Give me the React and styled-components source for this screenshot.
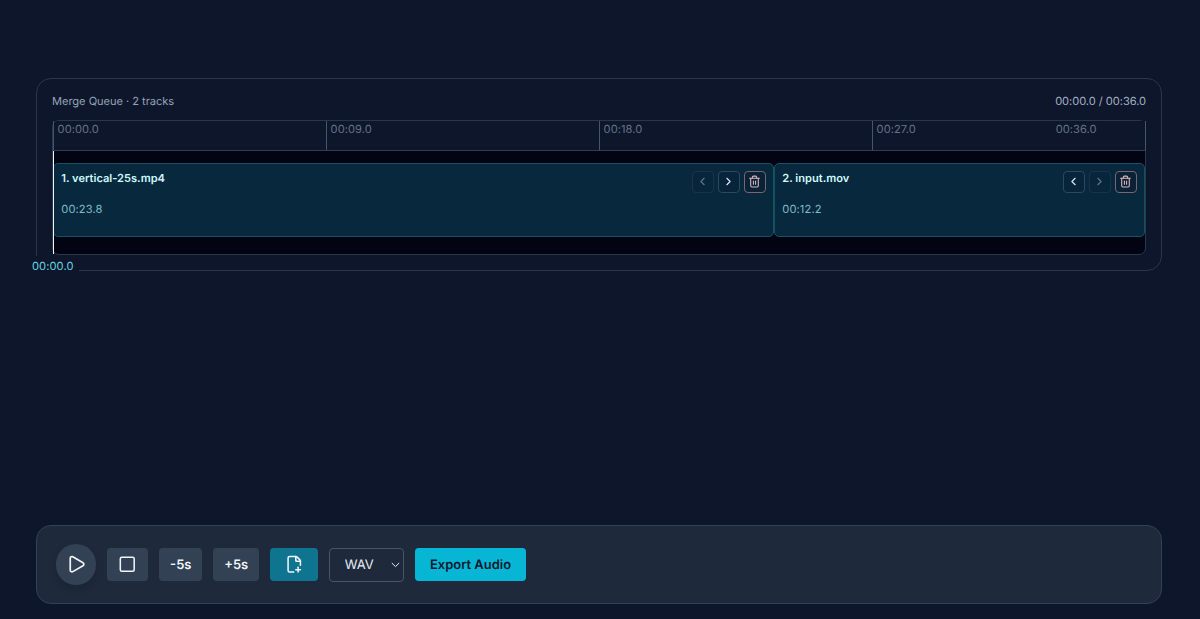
import React from 'react';
import styled, { createGlobalStyle, css } from 'styled-components';
import {
	ChevronLeft,
	ChevronRight,
	FilePlusCorner,
	Play,
	Square,
	Trash2,
} from 'lucide-react';

const colors = {
	page: '#0d162a',
	bar: '#1e293b',
	line: '#2a374b',
	tick: '#475569',
	button: '#334155',
	teal: '#0e7490',
	cyan: '#06b6d4',
};

const tracks = [
	{ name: 'vertical-25s.mp4', duration: 23.77 },
	{ name: 'input.mov', duration: 12.23 },
];

const total = 36;
const ticks = [0, 9, 18, 27];

const formatTime = (seconds) => {
	const minutes = String(Math.floor(seconds / 60)).padStart(2, '0');
	return `${minutes}:${(seconds % 60).toFixed(1).padStart(4, '0')}`;
};

const GlobalStyle = createGlobalStyle`
	* {
		box-sizing: border-box;
	}
	body {
		margin: 0;
		background: ${colors.page};
		font-family: Inter, 'Liberation Sans', sans-serif;
		text-rendering: geometricPrecision;
	}
	button, select {
		font-family: inherit;
		text-rendering: inherit;
	}
`;

const Page = styled.main`
	display: flex;
	flex-direction: column;
	justify-content: space-between;
	height: 619px;
	padding: 78px 38px 15px 36px;
	overflow: hidden;
`;

const Queue = styled.section`
	height: 192.5px;
	padding: 15px 15px 0;
	border: 1px solid ${colors.line};
	border-radius: 15px;
`;

const QueueHeader = styled.header`
	display: flex;
	justify-content: space-between;
	height: 26px;
	color: #94a3b8;
	font-size: 11.1px;
	line-height: 15px;
	letter-spacing: -0.04px;
`;

const Total = styled.span`
	color: #a3b1c6;
`;

const Timeline = styled.div`
	position: relative;
	height: 135px;
	border: 1px solid ${colors.line};
	border-radius: 7px;
	background: #020414;
`;

const Ruler = styled.div`
	display: grid;
	grid-template-columns: repeat(4, 1fr);
	height: 30px;
	margin-right: -1px;
	border-right: 1px solid ${colors.tick};
	border-bottom: 1px solid #303c4f;
	border-radius: 6px 0 0 0;
	background: ${colors.page};
`;

const Tick = styled.div`
	display: flex;
	justify-content: space-between;
	padding: 1px 48.4px 0 3.6px;
	border-left: 1px solid ${colors.tick};
	color: #64748b;
	font-size: 11.1px;
	line-height: 15px;
	letter-spacing: 0.07px;
`;

const Lane = styled.div`
	display: flex;
	padding-top: 12px;
`;

const Clip = styled.article`
	display: flex;
	justify-content: space-between;
	width: ${({ $share }) => $share * 100}%;
	height: 74px;
	padding: 6.5px 7px 6.5px 7.3px;
	border: 1px solid #155264;
	border-radius: 5px;
	background: #08293d;
`;

const ClipName = styled.h2`
	margin: 0 0 16px;
	color: #cffafe;
	font-size: 11.1px;
	font-weight: 600;
	line-height: 15px;
`;

const ClipTime = styled.p`
	margin: 0;
	color: #7dbcc9;
	font-size: 11.1px;
	line-height: 15px;
	letter-spacing: 0.12px;
`;

const ClipActions = styled.div`
	display: flex;
	gap: 3.8px;
`;

const ClipButton = styled.button`
	display: flex;
	align-items: center;
	justify-content: center;
	width: 22.2px;
	height: 22.2px;
	padding: 0;
	border: 1px solid #2b485c;
	border-radius: 4px;
	background: #07243a;
	color: #e2e8f0;
	${({ $danger }) =>
		$danger &&
		css`
			border-color: #776673;
			background: #0b2135;
			color: #d5b5bd;
		`}
	&:disabled {
		opacity: 0.4;
	}
`;

const Playhead = styled.div`
	position: absolute;
	top: 30px;
	left: 0;
	width: 1px;
	height: 103px;
	background: #f1f5f9;
`;

const PlayheadTime = styled.span`
	position: absolute;
	top: 105px;
	left: -26px;
	padding: 3px 5px 2px;
	border-radius: 4px;
	background: ${colors.page};
	color: #67d8e6;
	font-size: 11.1px;
	line-height: 15px;
	letter-spacing: 0.1px;
`;

const Controls = styled.section`
	display: flex;
	align-items: center;
	gap: 11.1px;
	height: 79px;
	padding: 0 18.6px;
	border: 1px solid ${colors.button};
	border-radius: 15px;
	background: ${colors.bar};
`;

const Button = styled.button`
	display: flex;
	align-items: center;
	justify-content: center;
	width: ${({ $width }) => $width}px;
	height: 33.3px;
	padding: 0;
	border: 0;
	border-radius: 3.7px;
	background: ${colors.button};
	color: #f1f5f9;
`;

const PlayButton = styled(Button)`
	height: 40.7px;
	border-radius: 50%;
	box-shadow: 0 4px 8px rgba(2, 6, 23, 0.14);
`;

const AddButton = styled(Button)`
	background: ${colors.teal};
`;

const TextButton = styled(Button)`
	padding-top: 2px;
	font-size: 12.95px;
	font-weight: 600;
	line-height: 19px;
`;

const ExportButton = styled(TextButton)`
	background: ${colors.cyan};
	color: #0a1a2e;
`;

const FormatField = styled.label`
	display: grid;
	width: 75px;
	height: 34px;
	align-items: center;
	border: 1px solid #475569;
	border-radius: 4px;
	color: #e8edf4;
	> * {
		grid-area: 1 / 1;
	}
	svg {
		justify-self: end;
		margin-right: 3px;
		pointer-events: none;
	}
`;

const FormatSelect = styled.select`
	width: 100%;
	height: 100%;
	padding: 0 0 0 14.5px;
	border: 0;
	background: transparent;
	color: inherit;
	font-size: 12.95px;
	appearance: none;
`;

const App = () => (
	<>
		<GlobalStyle />
		<Page>
			<Queue>
				<QueueHeader>
					<span>Merge Queue · {tracks.length} tracks</span>
					<Total>
						{formatTime(0)} / {formatTime(total)}
					</Total>
				</QueueHeader>
				<Timeline>
					<Ruler>
						{ticks.map((tick) => (
							<Tick key={tick}>
								<span>{formatTime(tick)}</span>
								{tick === 27 && <span>{formatTime(total)}</span>}
							</Tick>
						))}
					</Ruler>
					<Lane>
						{tracks.map(({ name, duration }, index) => (
							<Clip key={name} $share={duration / total}>
								<div>
									<ClipName>
										{index + 1}. {name}
									</ClipName>
									<ClipTime>{formatTime(duration)}</ClipTime>
								</div>
								<ClipActions>
									<ClipButton disabled={index === 0}>
										<ChevronLeft size={13} />
									</ClipButton>
									<ClipButton disabled={index === tracks.length - 1}>
										<ChevronRight size={13} />
									</ClipButton>
									<ClipButton $danger>
										<Trash2 size={13} />
									</ClipButton>
								</ClipActions>
							</Clip>
						))}
					</Lane>
					<Playhead>
						<PlayheadTime>{formatTime(0)}</PlayheadTime>
					</Playhead>
				</Timeline>
			</Queue>
			<Controls>
				<PlayButton $width={40.7}>
					<Play size={20.4} />
				</PlayButton>
				<Button $width={40.7}>
					<Square size={18.5} />
				</Button>
				<TextButton $width={43.2}>-5s</TextButton>
				<TextButton $width={45.5}>+5s</TextButton>
				<AddButton $width={48.1}>
					<FilePlusCorner size={18.5} />
				</AddButton>
				<FormatField>
					<FormatSelect defaultValue='WAV'>
						<option>WAV</option>
					</FormatSelect>
					<svg width='9' height='6' viewBox='0 0 9 6' fill='none'>
						<path d='M0.8 1l3.7 3.6L8.2 1' stroke='currentColor' strokeWidth='1' />
					</svg>
				</FormatField>
				<ExportButton $width={110.4}>Export Audio</ExportButton>
			</Controls>
		</Page>
	</>
);

export default App;
